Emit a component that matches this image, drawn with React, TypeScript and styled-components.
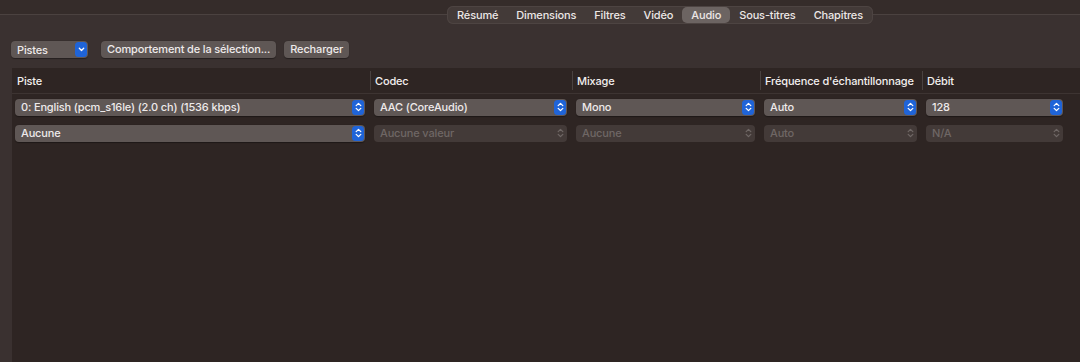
import React from 'react';
import styled, { createGlobalStyle } from 'styled-components';

const GlobalStyle = createGlobalStyle`
  html, body {
    margin: 0;
    padding: 0;
    background: #3a3130;
    font-family: Inter, "Liberation Sans", sans-serif;
    letter-spacing: -0.15px;
    -webkit-font-smoothing: antialiased;
  }
  #root {
    height: 362px;
  }
`;

const Window = styled.div`
  width: 1080px;
  height: 362px;
  display: flex;
  flex-direction: column;
  overflow: hidden;
  background: #3a3130;
`;

const TabStrip = styled.div`
  position: relative;
  height: 29px;
  display: flex;
  align-items: flex-start;
  padding: 6px 0 0 447px;
  box-sizing: border-box;
  background: linear-gradient(#352c2a 0, #352c2a 14px, #3a3130 15px);

  &::before {
    content: '';
    position: absolute;
    left: 0;
    right: 0;
    top: 14px;
    height: 1px;
    background: #4b4240;
  }
`;

const Segmented = styled.div`
  position: relative;
  display: flex;
  align-items: center;
  height: 18px;
  padding: 0 1px;
  border-radius: 6px;
  background: #433a38;
  box-shadow: inset 0 0 0 1px #4d4442;
`;

const Segment = styled.div<{ $active?: boolean }>`
  height: 16px;
  line-height: 16px;
  padding: 0 9px;
  border-radius: 5px;
  font-size: 11px;
  font-weight: 500;
  color: #ece7e6;
  background: ${(p) => (p.$active ? '#6c6462' : 'transparent')};
`;

const Toolbar = styled.div`
  display: flex;
  align-items: center;
  gap: 8px;
  padding: 12px 0 0 11px;
  height: 17px;
`;

const Button = styled.div<{ $gap?: number }>`
  height: 17px;
  line-height: 17px;
  padding: 0 6px;
  border-radius: 4px;
  background: #5f5755;
  box-shadow: 0 0.5px 1px rgba(0, 0, 0, 0.35);
  font-size: 11px;
  font-weight: 500;
  color: #eeeaea;
  margin-left: ${(p) => p.$gap ?? 0}px;
  white-space: nowrap;
`;

const Popup = styled.div<{ $disabled?: boolean; $width?: number }>`
  display: flex;
  align-items: center;
  justify-content: space-between;
  box-sizing: border-box;
  height: 17px;
  width: ${(p) => (p.$width ? `${p.$width}px` : '100%')};
  padding: 0 1px 0 6px;
  border-radius: 4px;
  background: ${(p) => (p.$disabled ? '#433a38' : '#5f5755')};
  box-shadow: ${(p) => (p.$disabled ? 'none' : '0 0.5px 1px rgba(0,0,0,0.35)')};
  font-size: 11px;
  font-weight: 500;
  color: ${(p) => (p.$disabled ? '#6f6765' : '#eeeaea')};
  white-space: nowrap;
`;

const Arrows = styled.span<{ $disabled?: boolean }>`
  display: flex;
  align-items: center;
  justify-content: center;
  width: 12px;
  height: 15px;
  border-radius: 3.5px;
  background: ${(p) => (p.$disabled ? 'transparent' : '#1f64d8')};
  flex-shrink: 0;
`;

const Table = styled.div`
  flex: 1;
  margin: 10px 0 0 12px;
  background: #2e2523;
  display: flex;
  flex-direction: column;
`;

const Row = styled.div<{ $header?: boolean }>`
  display: grid;
  grid-template-columns: 358px 202px 188px 162px 146px;
  height: 26px;
  align-items: center;
  border-bottom: ${(p) => (p.$header ? '1px solid #3d3432' : 'none')};
  box-sizing: border-box;
`;

const HeadCell = styled.div<{ $first?: boolean }>`
  position: relative;
  padding-left: 5px;
  font-size: 11px;
  font-weight: 500;
  color: #f3efee;
  white-space: nowrap;

  &::before {
    content: ${(p) => (p.$first ? 'none' : "''")};
    position: absolute;
    left: 0;
    top: -3px;
    width: 1px;
    height: 19px;
    background: #4a4240;
  }
`;

const Cell = styled.div<{ $first?: boolean }>`
  padding: 0 5px 0 ${(p) => (p.$first ? 3 : 4)}px;
`;

const Chevrons = ({ color }: { color: string }) => (
  <svg width="7" height="10" viewBox="0 0 7 10" fill="none">
    <path d="M1.2 3.6 L3.5 1.4 L5.8 3.6" stroke={color} strokeWidth="1.3" strokeLinecap="round" strokeLinejoin="round" />
    <path d="M1.2 6.4 L3.5 8.6 L5.8 6.4" stroke={color} strokeWidth="1.3" strokeLinecap="round" strokeLinejoin="round" />
  </svg>
);

const DownChevron = () => (
  <svg width="7" height="5" viewBox="0 0 7 5" fill="none">
    <path d="M1.3 1.3 L3.5 3.5 L5.7 1.3" stroke="#ffffff" strokeWidth="1.3" strokeLinecap="round" strokeLinejoin="round" />
  </svg>
);

interface SelectProps {
  label: string;
  disabled?: boolean;
}

const Select: React.FC<SelectProps> = ({ label, disabled }) => (
  <Popup $disabled={disabled}>
    <span>{label}</span>
    <Arrows $disabled={disabled}>
      <Chevrons color={disabled ? '#6f6765' : '#ffffff'} />
    </Arrows>
  </Popup>
);

const tabs = ['Résumé', 'Dimensions', 'Filtres', 'Vidéo', 'Audio', 'Sous-titres', 'Chapitres'];
const headers = ['Piste', 'Codec', 'Mixage', "Fréquence d'échantillonnage", 'Débit'];
const rows: { label: string; disabled?: boolean }[][] = [
  [
    { label: '0: English (pcm_s16le) (2.0 ch) (1536 kbps)' },
    { label: 'AAC (CoreAudio)' },
    { label: 'Mono' },
    { label: 'Auto' },
    { label: '128' },
  ],
  [
    { label: 'Aucune' },
    { label: 'Aucune valeur', disabled: true },
    { label: 'Aucune', disabled: true },
    { label: 'Auto', disabled: true },
    { label: 'N/A', disabled: true },
  ],
];

export default function App() {
  return (
    <Window>
      <GlobalStyle />
      <TabStrip>
        <Segmented>
          {tabs.map((t) => (
            <Segment key={t} $active={t === 'Audio'}>
              {t}
            </Segment>
          ))}
        </Segmented>
      </TabStrip>
      <Toolbar>
        <Popup $width={77}>
          <span>Pistes</span>
          <Arrows>
            <DownChevron />
          </Arrows>
        </Popup>
        <Button $gap={5}>Comportement de la sélection...</Button>
        <Button>Recharger</Button>
      </Toolbar>
      <Table>
        <Row $header>
          {headers.map((h, i) => (
            <HeadCell key={h} $first={i === 0}>
              {h}
            </HeadCell>
          ))}
        </Row>
        {rows.map((r, ri) => (
          <Row key={ri}>
            {r.map((c, ci) => (
              <Cell key={ci} $first={ci === 0}>
                <Select label={c.label} disabled={c.disabled} />
              </Cell>
            ))}
          </Row>
        ))}
      </Table>
    </Window>
  );
}
